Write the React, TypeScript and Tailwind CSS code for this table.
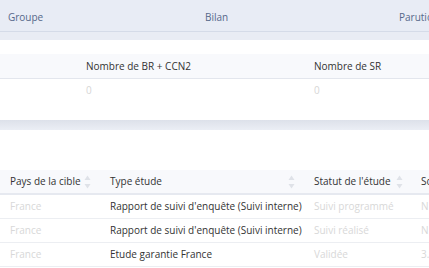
const font = { fontFamily: '"Open Sans", "Liberation Sans", sans-serif' }

const SortIcon = () => (
  <svg width="7" height="16" viewBox="0 0 7 16" className="shrink-0">
    <path d="M3.5 1.5 L6.5 6 L0.5 6 Z" fill="#dfe2e8" />
    <path d="M3.5 14.5 L6.5 10 L0.5 10 Z" fill="#dfe2e8" />
  </svg>
)

const rows = [
  { pays: "France", type: "Rapport de suivi d'enquête (Suivi interne)", statut: "Suivi programmé", so: "N" },
  { pays: "France", type: "Rapport de suivi d'enquête (Suivi interne)", statut: "Suivi réalisé", so: "N" },
  { pays: "France", type: "Etude garantie France", statut: "Validée", so: "3." },
]

export default function App() {
  return (
    <div style={font} className="w-[429px] h-[268px] overflow-hidden bg-white text-[10px]">
      {/* onglets */}
      <div className="h-[32px] bg-[#e8ecf5] border-b border-[#d5dbe8] flex items-center pt-[3px] text-[#56688a] whitespace-nowrap">
        <div className="w-[205px] shrink-0 pl-[8px]">Groupe</div>
        <div className="w-[194px] shrink-0">Bilan</div>
        <div className="shrink-0">Parution</div>
      </div>
      <div className="h-[8px] bg-[#e9ecf4]" />

      {/* synthese */}
      <div className="h-[80px] bg-white pt-[14px]">
        <div className="h-[25px] bg-[#f8f9fc] border-b border-[#e3e6ed] flex items-center text-[#333] whitespace-nowrap">
          <div className="w-[76px] shrink-0" />
          <div className="w-[228px] shrink-0 pl-[10px]">Nombre de BR + CCN2</div>
          <div className="shrink-0 pl-[10px]">Nombre de SR</div>
        </div>
        <div className="h-[22px] flex items-center text-[#d6d6d6]">
          <div className="w-[76px] shrink-0" />
          <div className="w-[228px] shrink-0 pl-[10px]">0</div>
          <div className="shrink-0 pl-[10px]">0</div>
        </div>
      </div>
      <div className="h-[10px] bg-gradient-to-b from-[#dde1ea] to-[#ebeef5]" />

      {/* etudes */}
      <div className="bg-white pt-[40px]">
        <div className="h-[25px] bg-[#f8f9fc] border-b-2 border-[#e6e9f0] flex items-center text-[#333] whitespace-nowrap">
          <div className="w-[100px] shrink-0 pl-[10px] pr-[9px] flex items-center justify-between">
            Pays de la cible <SortIcon />
          </div>
          <div className="w-[204px] shrink-0 pl-[10px] pr-[9px] flex items-center justify-between">
            Type étude <SortIcon />
          </div>
          <div className="w-[107px] shrink-0 pl-[10px] pr-[8px] flex items-center justify-between">
            Statut de l'étude <SortIcon />
          </div>
          <div className="shrink-0 pl-[10px]">Source</div>
        </div>
        {rows.map((r, i) => (
          <div key={i} className="h-[24px] border-b border-[#eceef2] flex items-center whitespace-nowrap">
            <div className="w-[100px] shrink-0 pl-[10px] text-[#d8d8d8]">{r.pays}</div>
            <div className="w-[204px] shrink-0 pl-[10px] text-[#333]">{r.type}</div>
            <div className="w-[107px] shrink-0 pl-[10px] text-[#d8d8d8]">{r.statut}</div>
            <div className="shrink-0 pl-[10px] text-[#d8d8d8]">{r.so}</div>
          </div>
        ))}
      </div>
    </div>
  )
}
